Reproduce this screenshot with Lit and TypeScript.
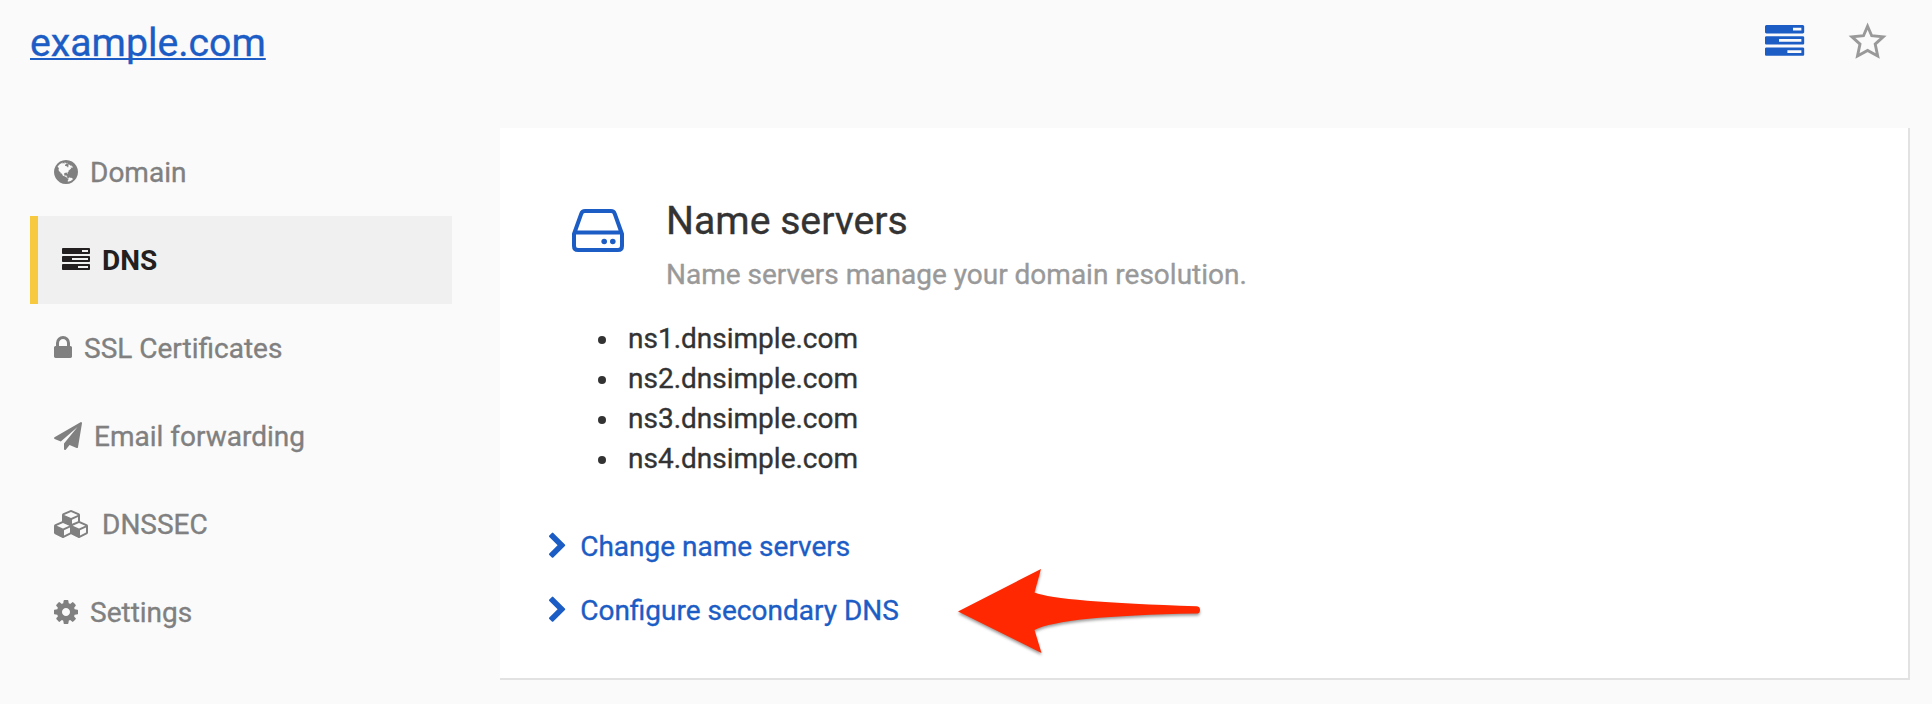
import { LitElement, html, svg, css } from "lit";
import { customElement } from "lit/decorators.js";

interface Glyph { x: number; y: number; w: number; h: number; d: string; }

// Glyphs are drawn on a 1792-unit em; 64 units make one pixel at 28px.
const GLYPHS: Record<string, Glyph> = {
  globe: { x: 128, y: 128, w: 1536, h: 1536, d: "M896 128q209 0 385.5 103t279.5 279.5 103 385.5-103 385.5-279.5 279.5-385.5 103-385.5-103-279.5-279.5-103-385.5 103-385.5 279.5-279.5 385.5-103zm274 521q-2 1-9.5 9.5t-13.5 9.5q2 0 4.5-5t5-11 3.5-7q6-7 22-15 14-6 52-12 34-8 51 11-2-2 9.5-13t14.5-12q3-2 15-4.5t15-7.5l2-22q-12 1-17.5-7t-6.5-21q0 2-6 8 0-7-4.5-8t-11.5 1-9 1q-10-3-15-7.5t-8-16.5-4-15q-2-5-9.5-11t-9.5-10q-1-2-2.5-5.5t-3-6.5-4-5.5-5.5-2.5-7 5-7.5 10-4.5 5q-3-2-6-1.5t-4.5 1-4.5 3-5 3.5q-3 2-8.5 3t-8.5 2q15-5-1-11-10-4-16-3 9-4 7.5-12t-8.5-14h5q-1-4-8.5-8.5t-17.5-8.5-13-6q-8-5-34-9.5t-33-.5q-5 6-4.5 10.5t4 14 3.5 12.5q1 6-5.5 13t-6.5 12q0 7 14 15.5t10 21.5q-3 8-16 16t-16 12q-5 8-1.5 18.5t10.5 16.5q2 2 1.5 4t-3.5 4.5-5.5 4-6.5 3.5l-3 2q-11 5-20.5-6t-13.5-26q-7-25-16-30-23-8-29 1-5-13-41-26-25-9-58-4 6-1 0-15-7-15-19-12 3-6 4-17.5t1-13.5q3-13 12-23 1-1 7-8.5t9.5-13.5.5-6q35 4 50-11 5-5 11.5-17t10.5-17q9-6 14-5.5t14.5 5.5 14.5 5q14 1 15.5-11t-7.5-20q12 1 3-17-4-7-8-9-12-4-27 5-8 4 2 8-1-1-9.5 10.5t-16.5 17.5-16-5q-1-1-5.5-13.5t-9.5-13.5q-8 0-16 15 3-8-11-15t-24-8q19-12-8-27-7-4-20.5-5t-19.5 4q-5 7-5.5 11.5t5 8 10.5 5.5 11.5 4 8.5 3q14 10 8 14-2 1-8.5 3.5t-11.5 4.5-6 4q-3 4 0 14t-2 14q-5-5-9-17.5t-7-16.5q7 9-25 6l-10-1q-4 0-16 2t-20.5 1-13.5-8q-4-8 0-20 1-4 4-2-4-3-11-9.5t-10-8.5q-46 15-94 41 6 1 12-1 5-2 13-6.5t10-5.5q34-14 42-7l5-5q14 16 20 25-7-4-30-1-20 6-22 12 7 12 5 18-4-3-11.5-10t-14.5-11-15-5q-16 0-22 1-146 80-235 222 7 7 12 8 4 1 5 9t2.5 11 11.5-3q9 8 3 19 1-1 44 27 19 17 21 21 3 11-10 18-1-2-9-9t-9-4q-3 5 .5 18.5t10.5 12.5q-7 0-9.5 16t-2.5 35.5-1 23.5l2 1q-3 12 5.5 34.5t21.5 19.5q-13 3 20 43 6 8 8 9 3 2 12 7.5t15 10 10 10.5q4 5 10 22.5t14 23.5q-2 6 9.5 20t10.5 23q-1 0-2.5 1t-2.5 1q3 7 15.5 14t15.5 13q1 3 2 10t3 11 8 2q2-20-24-62-15-25-17-29-3-5-5.5-15.5t-4.5-14.5q2 0 6 1.5t8.5 3.5 7.5 4 2 3q-3 7 2 17.5t12 18.5 17 19 12 13q6 6 14 19.5t0 13.5q9 0 20 10.5t17 19.5q5 8 8 26t5 24q2 7 8.5 13.5t12.5 9.5l16 8 13 7q5 2 18.5 10.5t21.5 11.5q10 4 16 4t14.5-2.5 13.5-3.5q15-2 29 15t21 21q36 19 55 11-2 1 .5 7.5t8 15.5 9 14.5 5.5 8.5q5 6 18 15t18 15q6-4 7-9-3 8 7 20t18 10q14-3 14-32-31 15-49-18 0-1-2.5-5.5t-4-8.5-2.5-8.5 0-7.5 5-3q9 0 10-3.5t-2-12.5-4-13q-1-8-11-20t-12-15q-5 9-16 8t-16-9q0 1-1.5 5.5t-1.5 6.5q-13 0-15-1 1-3 2.5-17.5t3.5-22.5q1-4 5.5-12t7.5-14.5 4-12.5-4.5-9.5-17.5-2.5q-19 1-26 20-1 3-3 10.5t-5 11.5-9 7q-7 3-24 2t-24-5q-13-8-22.5-29t-9.5-37q0-10 2.5-26.5t3-25-5.5-24.5q3-2 9-9.5t10-10.5q2-1 4.5-1.5t4.5 0 4-1.5 3-6q-1-1-4-3-3-3-4-3 7 3 28.5-1.5t27.5 1.5q15 11 22-2 0-1-2.5-9.5t-.5-13.5q5 27 29 9 3 3 15.5 5t17.5 5q3 2 7 5.5t5.5 4.5 5-.5 8.5-6.5q10 14 12 24 11 40 19 44 7 3 11 2t4.5-9.5 0-14-1.5-12.5l-1-8v-18l-1-8q-15-3-18.5-12t1.5-18.5 15-18.5q1-1 8-3.5t15.5-6.5 12.5-8q21-19 15-35 7 0 11-9-1 0-5-3t-7.5-5-4.5-2q9-5 2-16 5-3 7.5-11t7.5-10q9 12 21 2 7-8 1-16 5-7 20.5-10.5t18.5-9.5q7 2 8-2t1-12 3-12q4-5 15-9t13-5l17-11q3-4 0-4 18 2 31-11 10-11-6-20 3-6-3-9.5t-15-5.5q3-1 11.5-.5t10.5-1.5q15-10-7-16-17-5-43 12zm-163 877q206-36 351-189-3-3-12.5-4.5t-12.5-3.5q-18-7-24-8 1-7-2.5-13t-8-9-12.5-8-11-7q-2-2-7-6t-7-5.5-7.5-4.5-8.5-2-10 1l-3 1q-3 1-5.5 2.5t-5.5 3-4 3 0 2.5q-21-17-36-22-5-1-11-5.5t-10.5-7-10-1.5-11.5 7q-5 5-6 15t-2 13q-7-5 0-17.5t2-18.5q-3-6-10.5-4.5t-12 4.5-11.5 8.5-9 6.5-8.5 5.5-8.5 7.5q-3 4-6 12t-5 11q-2-4-11.5-6.5t-9.5-5.5q2 10 4 35t5 38q7 31-12 48-27 25-29 40-4 22 12 26 0 7-8 20.5t-7 21.5q0 6 2 16z" },
  tasks: { x: 0, y: 128, w: 1792, h: 1408, d: "M1024 1408h640v-128h-640v128zm-384-512h1024v-128h-1024v128zm640-512h384v-128h-384v128zm512 832v256q0 26-19 45t-45 19h-1664q-26 0-45-19t-19-45v-256q0-26 19-45t45-19h1664q26 0 45 19t19 45zm0-512v256q0 26-19 45t-45 19h-1664q-26 0-45-19t-19-45v-256q0-26 19-45t45-19h1664q26 0 45 19t19 45zm0-512v256q0 26-19 45t-45 19h-1664q-26 0-45-19t-19-45v-256q0-26 19-45t45-19h1664q26 0 45 19t19 45z" },
  lock: { x: 320, y: 128, w: 1152, h: 1408, d: "M640 768h512v-192q0-106-75-181t-181-75-181 75-75 181v192zm832 96v576q0 40-28 68t-68 28h-960q-40 0-68-28t-28-68v-576q0-40 28-68t68-28h32v-192q0-184 132-316t316-132 316 132 132 316v192h32q40 0 68 28t28 68z" },
  plane: { x: 0, y: 0, w: 1792, h: 1792, d: "M1764 11q33 24 27 64l-256 1536q-5 29-32 45-14 8-31 8-11 0-24-5l-453-185-242 295q-18 23-49 23-13 0-22-4-19-7-30.5-23.5t-11.5-36.5v-349l864-1059-1069 925-395-162q-37-14-40-55-2-40 32-59l1664-960q15-9 32-9 20 0 36 11z" },
  cubes: { x: 0, y: 0, w: 2304, h: 1792, d: "M640 1632l384-192v-314l-384 164v342zm-64-454l404-173-404-173-404 173zm1088 454l384-192v-314l-384 164v342zm-64-454l404-173-404-173-404 173zm-448-293l384-165v-266l-384 164v267zm-64-379l441-189-441-189-441 189zm1088 518v416q0 36-19 67t-52 47l-448 224q-25 14-57 14t-57-14l-448-224q-4-2-7-4-2 2-7 4l-448 224q-25 14-57 14t-57-14l-448-224q-33-16-52-47t-19-67v-416q0-38 21.5-70t56.5-48l434-186v-400q0-38 21.5-70t56.5-48l448-192q23-10 50-10t50 10l448 192q35 16 56.5 48t21.5 70v400l434 186q36 16 57 48t21 70z" },
  cog: { x: 128, y: 128, w: 1536, h: 1536, d: "M1152 896q0-106-75-181t-181-75-181 75-75 181 75 181 181 75 181-75 75-181zm512-109v222q0 12-8 23t-20 13l-185 28q-19 54-39 91 35 50 107 138 10 12 10 25t-9 23q-27 37-99 108t-94 71q-12 0-26-9l-138-108q-44 23-91 38-16 136-29 186-7 28-36 28h-222q-14 0-24.5-8.5t-11.5-21.5l-28-184q-49-16-90-37l-141 107q-10 9-25 9-14 0-25-11-126-114-165-168-7-10-7-23 0-12 8-23 15-21 51-66.5t54-70.5q-27-50-41-99l-183-27q-13-2-21-12.5t-8-23.5v-222q0-12 8-23t19-13l186-28q14-46 39-92-40-57-107-138-10-12-10-24 0-10 9-23 26-36 98.5-107.5t94.5-71.5q13 0 26 10l138 107q44-23 91-38 16-136 29-186 7-28 36-28h222q14 0 24.5 8.5t11.5 21.5l28 184q49 16 90 37l142-107q9-9 24-9 13 0 25 10 129 119 165 170 7 8 7 22 0 12-8 23-15 21-51 66.5t-54 70.5q26 50 41 98l183 28q13 2 21 12.5t8 23.5z" },
  chevron: { x: 346, y: 116, w: 1036, h: 1536, d: "M1363 877l-742 742q-19 19-45 19t-45-19l-166-166q-19-19-19-45t19-45l531-531-531-531q-19-19-19-45t19-45l166-166q19-19 45-19t45 19l742 742q19 19 19 45t-19 45z" },
};

const glyph = (name: string, size = 28) => {
  const g = GLYPHS[name];
  const k = size / 1792;
  return html`<svg class="glyph ${name}" width=${g.w * k} height=${g.h * k}
    viewBox="${g.x} ${g.y} ${g.w} ${g.h}" aria-hidden="true">${svg`<path d=${g.d}></path>`}</svg>`;
};

const NAV = [
  { icon: "globe", label: "Domain" },
  { icon: "tasks", label: "DNS", active: true },
  { icon: "lock", label: "SSL Certificates" },
  { icon: "plane", label: "Email forwarding" },
  { icon: "cubes", label: "DNSSEC" },
  { icon: "cog", label: "Settings" },
];
const SERVERS = ["ns1.dnsimple.com", "ns2.dnsimple.com", "ns3.dnsimple.com", "ns4.dnsimple.com"];
const ACTIONS = ["Change name servers", "Configure secondary DNS"];

@customElement("app-root")
export class AppRoot extends LitElement {
  static styles = css`
    :host { display: block; box-sizing: border-box; height: 704px; background: #fafafa; color: #333;
      font: 28px/40px Roboto, sans-serif; -webkit-text-stroke: 0.35px currentColor; overflow: hidden; }
    * { box-sizing: border-box; }
    a { color: #1c5dc5; text-decoration: none; }
    svg { display: block; flex: none; fill: currentColor; overflow: visible; }
    .header { display: flex; justify-content: space-between; height: 128px; padding: 19px 46px 0 30px; }
    .title { margin: 0; font-size: 39.2px; line-height: 48px; font-weight: 400; }
    .title a { text-decoration: underline; text-decoration-thickness: 2px; text-underline-offset: 2px; text-decoration-skip-ink: none; }
    .tools { display: flex; align-items: flex-start; gap: 45px; padding-top: 4px; color: #1c5dc5; }
    .tools .glyph { margin-top: 2px; }
    .star { color: #999; }
    .body { display: flex; align-items: flex-start; gap: 48px; padding-left: 30px; }
    .nav { width: 422px; }
    .item { display: flex; align-items: center; height: 88px; padding: 0 24px; color: #808080; gap: 12px; }
    .item span { margin-top: 2px; }
    .item.active { color: #231f20; background: #f0f0f0; border-left: 8px solid #f7c93e; font-weight: 700; -webkit-text-stroke-width: 0; }
    .item .tasks, .item .lock { margin-top: -2px; }
    .card { position: relative; width: 1410px; height: 552px; background: #fff;
      border-right: 2px solid #e2e2e2; border-bottom: 2px solid #e2e2e2; padding: 68px 48px 0; }
    .intro { display: flex; padding-left: 24px; }
    .disk { margin: 13px 42px 0 0; color: #1c5dc5; }
    .heading { margin: 0; font-size: 39.2px; line-height: 50px; font-weight: 400; }
    .lead { margin: 9px 0 0; color: #999; line-height: 40px; }
    .servers { margin: 24px 0 0; padding-left: 50px; list-style: none; }
    .server { display: flex; align-items: center; gap: 22px; }
    .server::before { content: ""; width: 8px; height: 8px; margin-top: 2px; border-radius: 50%; background: #333; }
    .actions { display: grid; gap: 24px; margin-top: 48px; padding-left: 1px; }
    .action { display: flex; align-items: center; gap: 15px; }
    .action .chevron { margin-top: -2px; }
    .arrow { position: absolute; left: 457px; top: 440px; filter: drop-shadow(0 2px 1.5px rgba(0, 0, 0, .4)); }
  `;

  render() {
    return html`
      <header class="header">
        <h1 class="title"><a href="#">example.com</a></h1>
        <div class="tools">
          ${glyph("tasks", 39.2)}
          <svg class="star" width="37" height="37" viewBox="0 0 37 37">
            <path d="M18.600 3.200 22.700 12.700 34.200 13.900 26.200 21.100 28.700 33 18.600 27.500 8.500 33 11 21.100 3 13.900 14.500 12.700Z" fill="none" stroke="currentColor" stroke-width="2.900"></path>
          </svg>
        </div>
      </header>
      <div class="body">
        <nav class="nav">
          ${NAV.map((n) => html`<div class="item ${n.active ? "active" : ""}">${glyph(n.icon)}<span>${n.label}</span></div>`)}
        </nav>
        <main class="card">
          <section class="intro">
            <svg class="disk" width="52" height="43" viewBox="0 0 52 43">
              <path d="M2 25 9.200 4.800Q10.200 2 13 2H39Q41.800 2 42.800 4.800L50 25V37Q50 41 46 41H6Q2 41 2 37ZM2 23.500H50" fill="none" stroke="currentColor" stroke-width="4" stroke-linejoin="round"></path>
              <circle cx="32.200" cy="32.500" r="2.800"></circle><circle cx="40.800" cy="32.500" r="2.800"></circle>
            </svg>
            <div>
              <h2 class="heading">Name servers</h2>
              <p class="lead">Name servers manage your domain resolution.</p>
            </div>
          </section>
          <ul class="servers">${SERVERS.map((s) => html`<li class="server">${s}</li>`)}</ul>
          <div class="actions">
            ${ACTIONS.map((a) => html`<a class="action" href="#">${glyph("chevron")}<span>${a}</span></a>`)}
          </div>
          <svg class="arrow" width="243" height="86" viewBox="0 0 243 86">
            <path d="M1 43.500 84 1 77.500 24.500Q102 34 239.300 38.200A3.700 3.700 0 0 1 239.300 45.600Q105 48 77.500 62L84.500 85Z" fill="#ff2800"></path>
          </svg>
        </main>
      </div>`;
  }
}
